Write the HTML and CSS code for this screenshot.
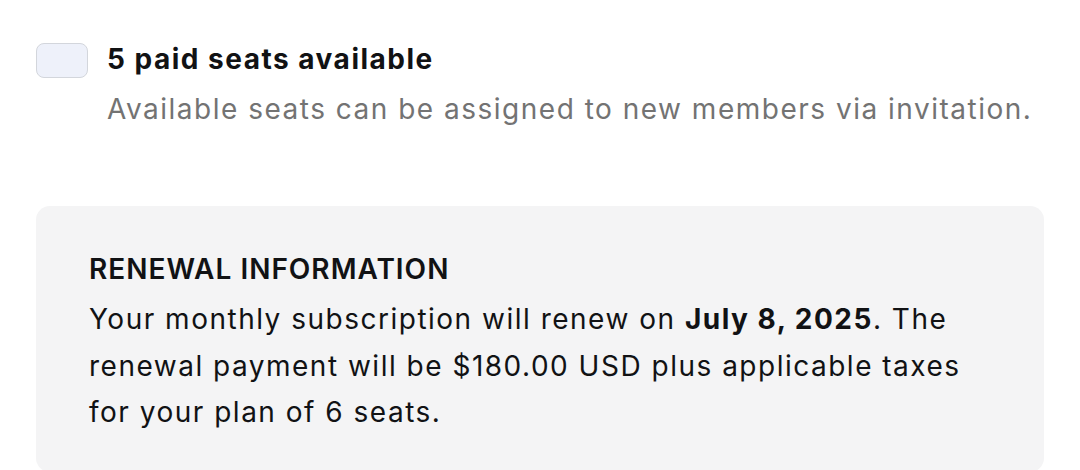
FILE: index.html
```html
<!DOCTYPE html>
<html>
<head>
    <title>Seats and renewal</title>
    <link rel="stylesheet" href="styles.css">
</head>
<body>
    <div class="seats">
        <div class="seats-check"></div>
        <div class="seats-text">
            <div class="seats-title">5 paid seats available</div>
            <div class="seats-note">Available seats can be assigned to new members via invitation.</div>
        </div>
    </div>
    <div class="renewal">
        <div class="renewal-title">RENEWAL INFORMATION</div>
        <div class="renewal-body">
            Your monthly subscription will renew on <b>July 8, 2025</b>. The
            renewal payment will be $180.00 USD plus applicable taxes
            for your plan of 6 seats.
        </div>
    </div>
</body>
</html>
```

FILE: styles.css
```css
body {
    margin: 0;
    padding: 40px 36px 0 36px;
    font-family: Inter, "Noto Sans", sans-serif;
    letter-spacing: 1.5px;
    color: #111214;
    background-color: #ffffff;
    font-size: 28px;
}
.seats {
    display: flex;
    gap: 19px;
    align-items: flex-start;
}
.seats-check {
    width: 50px;
    height: 33px;
    margin-top: 3px;
    border: 1.5px solid #d3d6dc;
    border-radius: 8px;
    background-color: #eef1fa;
    flex-shrink: 0;
}
.seats-title {
    font-weight: 700;
    line-height: 38px;
}
.seats-note {
    color: #737373;
    line-height: 44px;
    margin-top: 9px;
}
.renewal {
    margin-top: 75px;
    width: 955px;
    height: 226px;
    padding: 40px 0 0 53px;
    background-color: #f4f4f5;
    border-radius: 14px;
}
.renewal-title {
    font-weight: 600;
    line-height: 46px;
    letter-spacing: 1px;
}
.renewal-body {
    margin-top: 4px;
    line-height: 46.5px;
    max-width: 890px;
}
.renewal-body b {
    font-weight: 700;
}
```
